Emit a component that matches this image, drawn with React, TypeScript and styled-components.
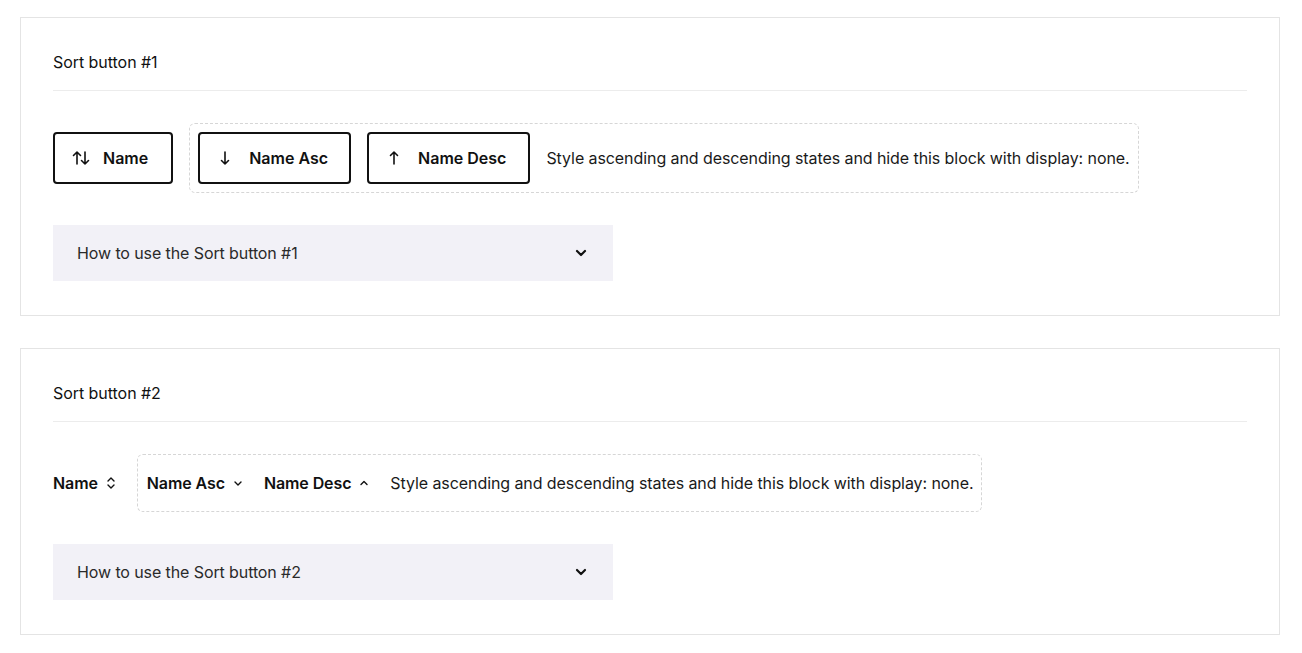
import React from "react";
import styled, { createGlobalStyle } from "styled-components";

const Global = createGlobalStyle`
  html, body { margin: 0; padding: 0; background: #fff; }
  body { font-family: Inter, "Noto Sans", sans-serif; color: #111; -webkit-font-smoothing: antialiased; }
`;

const Page = styled.div`
  display: flex;
  flex-direction: column;
  gap: 32px;
  padding: 17px 22px 18px 20px;
`;

const Card = styled.section`
  border: 1px solid #e4e4e4;
  padding: 32px 32px 34px;
  display: flex;
  flex-direction: column;
`;

const Title = styled.h2`
  margin: 0;
  font-size: 16px;
  font-weight: 400;
  line-height: 24px;
  padding-bottom: 16px;
  border-bottom: 1px solid #ececec;
  color: #111;
  letter-spacing: -0.05px;
`;

const Row = styled.div<{ $gap: number }>`
  display: flex;
  align-items: center;
  gap: ${(p) => p.$gap}px;
  margin-top: 32px;
`;

const Demo = styled.div<{ $pad: string; $gap: number }>`
  display: flex;
  align-items: center;
  gap: ${(p) => p.$gap}px;
  padding: ${(p) => p.$pad};
  border: 1px dashed #d6d6d6;
  border-radius: 6px;
`;

const OutlineButton = styled.button<{ $gap?: number; $right?: number }>`
  display: inline-flex;
  align-items: center;
  gap: ${(p) => p.$gap ?? 16}px;
  height: 52px;
  padding: 0 ${(p) => p.$right ?? 21}px 0 17px;
  border: 2px solid #111;
  border-radius: 4px;
  background: #fff;
  font-family: inherit;
  font-size: 16px;
  font-weight: 600;
  color: #111;
  cursor: pointer;
`;

const PlainButton = styled.button`
  display: inline-flex;
  align-items: center;
  gap: 7px;
  padding: 0;
  border: 0;
  background: none;
  font-family: inherit;
  font-size: 16px;
  font-weight: 600;
  color: #111;
  line-height: 24px;
  letter-spacing: -0.1px;
  cursor: pointer;
`;

const Note = styled.span`
  font-size: 16px;
  line-height: 24px;
  color: #1a1a1a;
  letter-spacing: -0.08px;
`;

const Accordion = styled.div`
  margin-top: 32px;
  width: 560px;
  height: 56px;
  box-sizing: border-box;
  background: #f2f1f7;
  display: flex;
  align-items: center;
  justify-content: space-between;
  padding: 0 24px 0 24px;
  font-size: 16px;
  color: #2a2a2a;
  letter-spacing: -0.1px;
`;

const Icon = styled.svg`
  display: block;
  flex: none;
`;

const SortBoth = () => (
  <Icon width="18" height="20" viewBox="1 0 18 20" fill="none" stroke="#111" strokeWidth="1.6" strokeLinecap="round" strokeLinejoin="round">
    <path d="M6 16V4M2.5 7.5L6 4l3.5 3.5" />
    <path d="M14 4v12M10.5 12.5L14 16l3.5-3.5" />
  </Icon>
);

const ArrowDown = () => (
  <Icon width="16" height="20" viewBox="0 0 16 20" fill="none" stroke="#111" strokeWidth="1.6" strokeLinecap="round" strokeLinejoin="round">
    <path d="M8 4v12M4.5 12.5L8 16l3.5-3.5" />
  </Icon>
);

const ArrowUp = () => (
  <Icon width="16" height="20" viewBox="0 0 16 20" fill="none" stroke="#111" strokeWidth="1.6" strokeLinecap="round" strokeLinejoin="round">
    <path d="M8 16V4M4.5 7.5L8 4l3.5 3.5" />
  </Icon>
);

const UpDown = () => (
  <Icon width="12" height="16" viewBox="0 0 12 16" fill="none" stroke="#111" strokeWidth="1.4" strokeLinecap="round" strokeLinejoin="round">
    <path d="M3 6l3-3 3 3M3 10l3 3 3-3" />
  </Icon>
);

const SmallDown = () => (
  <Icon width="12" height="16" viewBox="0 0 12 16" fill="none" stroke="#111" strokeWidth="1.4" strokeLinecap="round" strokeLinejoin="round">
    <path d="M3 7l3 3 3-3" />
  </Icon>
);

const SmallUp = () => (
  <Icon width="12" height="16" viewBox="0 0 12 16" fill="none" stroke="#111" strokeWidth="1.4" strokeLinecap="round" strokeLinejoin="round">
    <path d="M3 9.5l3-3 3 3" />
  </Icon>
);

const Chevron = () => (
  <Icon width="16" height="16" viewBox="0 0 16 16" fill="none" stroke="#111" strokeWidth="2.2" strokeLinecap="round" strokeLinejoin="round">
    <path d="M4 6l4 4 4-4" />
  </Icon>
);

const NOTE = "Style ascending and descending states and hide this block with display: none.";

export default function App() {
  return (
    <>
      <Global />
      <Page>
        <Card>
          <Title>Sort button #1</Title>
          <Row $gap={16}>
            <OutlineButton $gap={13} $right={23}>
              <SortBoth />
              Name
            </OutlineButton>
            <Demo $pad="8px 8px 8px 8px" $gap={16}>
              <OutlineButton>
                <ArrowDown />
                Name Asc
              </OutlineButton>
              <OutlineButton $right={22}>
                <ArrowUp />
                Name Desc
              </OutlineButton>
              <Note>{NOTE}</Note>
            </Demo>
          </Row>
          <Accordion>
            How to use the Sort button #1
            <Chevron />
          </Accordion>
        </Card>
        <Card>
          <Title>Sort button #2</Title>
          <Row $gap={20}>
            <PlainButton>
              Name
              <UpDown />
            </PlainButton>
            <Demo $pad="16px 8px 16px 9px" $gap={20}>
              <PlainButton>
                Name Asc
                <SmallDown />
              </PlainButton>
              <PlainButton>
                Name Desc
                <SmallUp />
              </PlainButton>
              <Note>{NOTE}</Note>
            </Demo>
          </Row>
          <Accordion>
            How to use the Sort button #2
            <Chevron />
          </Accordion>
        </Card>
      </Page>
    </>
  );
}
